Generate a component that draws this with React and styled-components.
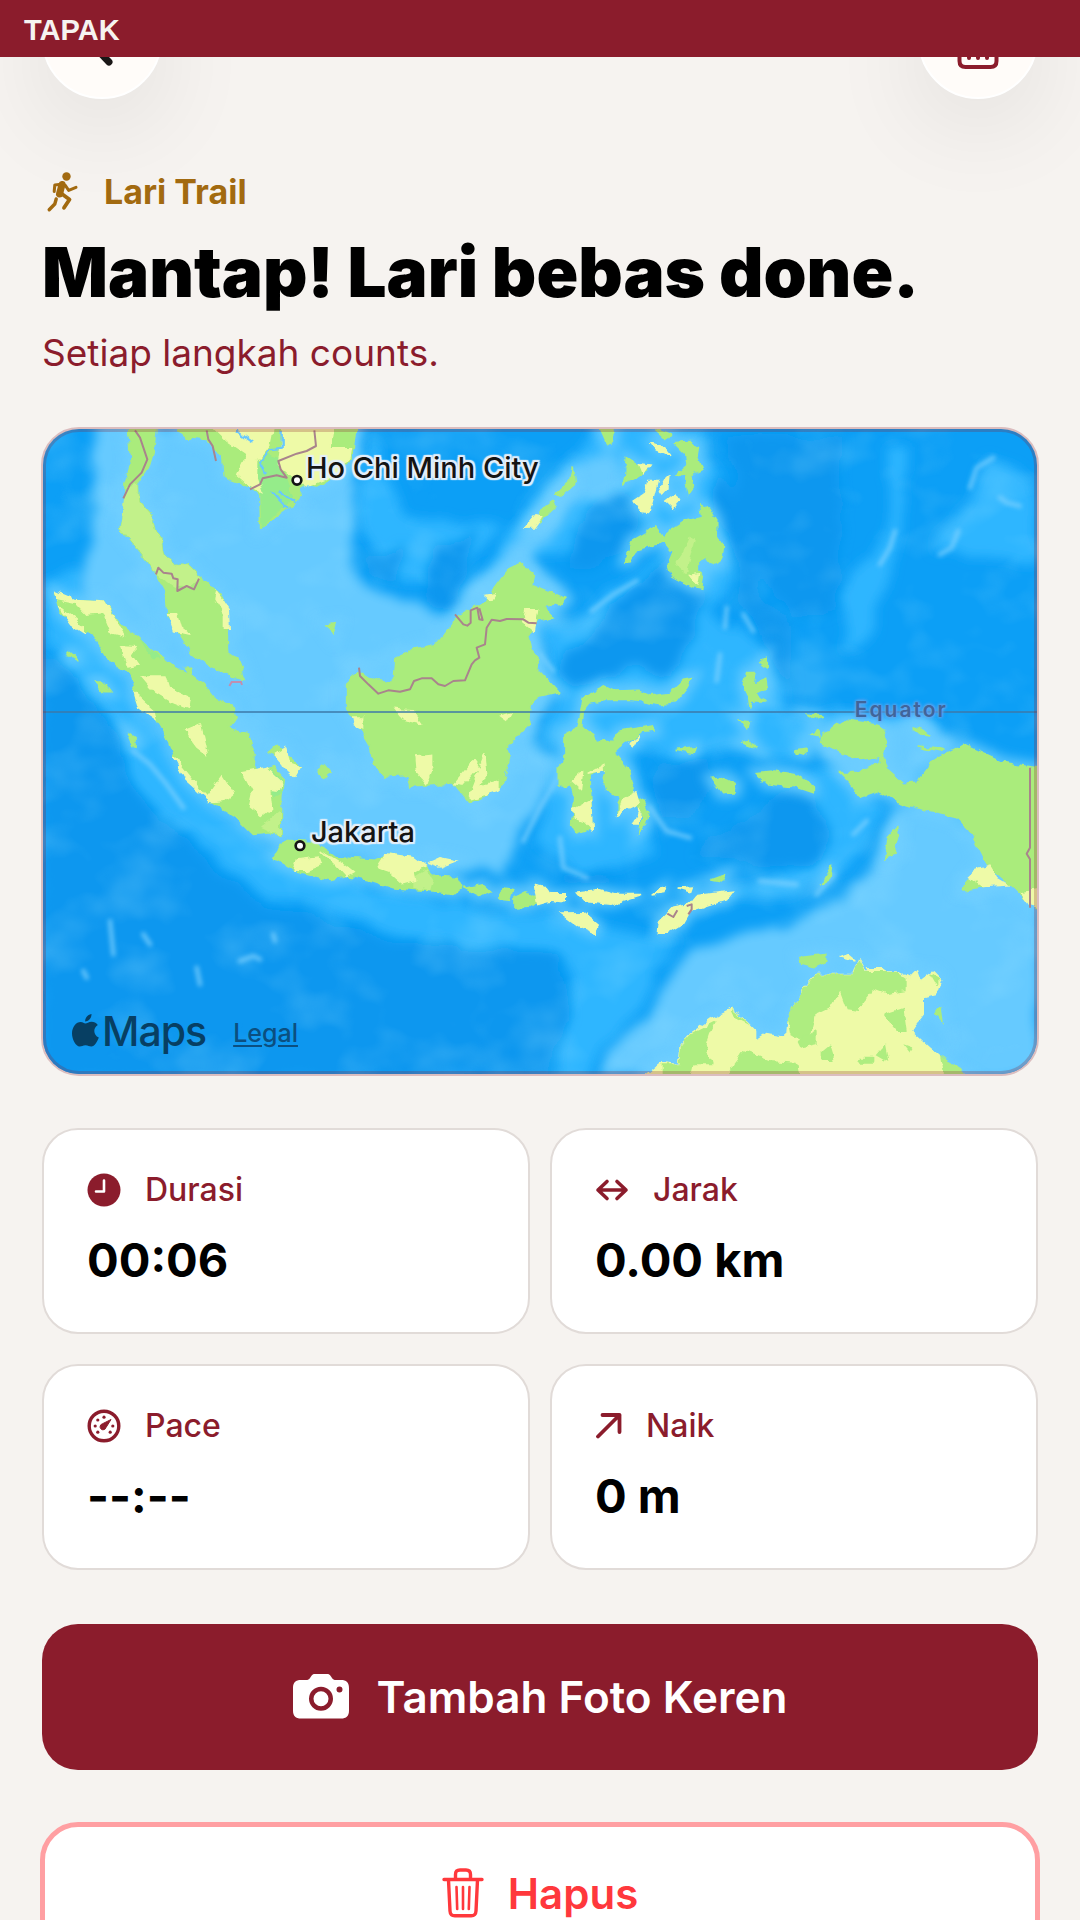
import React from "react";
import styled, { createGlobalStyle } from "styled-components";

const wine = "#8b1c2c";
const ui = `Inter, "Noto Sans", sans-serif`;

const GlobalStyle = createGlobalStyle`
  *, *::before, *::after { box-sizing: border-box; }
  body { margin: 0; background: #f6f3f0; font-family: ${ui}; color: #000; }
  svg { display: block; flex: none; }
`;

const Shell = styled.div`
  display: flex;
  flex-direction: column;
  height: 100vh;
  background: #f6f3f0;
`;

const Banner = styled.header`
  position: relative;
  z-index: 2;
  flex: none;
  padding: 14px 24px 11px;
  background: ${wine};
  color: #f6f3f0;
  font: 700 29px/32px "Liberation Sans", sans-serif;
`;

const Scroller = styled.main`
  flex: 1;
  min-height: 0;
  overflow: hidden auto;
  scrollbar-width: none;
`;

const Screen = styled.div`
  display: flex;
  flex-direction: column;
  gap: 54px;
  margin-top: -78px;
  padding: 0 42px 42px;
`;

const NavBar = styled.nav`
  display: flex;
  justify-content: space-between;
  margin-bottom: 18px;
`;

const RoundButton = styled.button`
  display: grid;
  place-items: center;
  width: 120px;
  height: 120px;
  padding: 0;
  border: 2px solid #fff;
  border-radius: 50%;
  background: #fffcf9;
  color: ${(p) => p.$color};
  box-shadow: 0 24px 100px rgba(0, 0, 0, 0.09);
`;

const Intro = styled.section`
  display: flex;
  flex-direction: column;
  gap: 16px;
`;

const Activity = styled.div`
  display: flex;
  align-items: center;
  gap: 22px;
  color: #a26a10;
  font-size: 34px;
  font-weight: 700;
  line-height: 42px;
`;

const Headline = styled.h1`
  margin: 0;
  font-size: 69px;
  font-weight: 900;
  line-height: 86px;
`;

const Tagline = styled.p`
  margin: 0;
  color: ${wine};
  font-size: 37px;
  line-height: 44px;
`;

const MapFrame = styled.section`
  position: relative;
  aspect-ratio: 996 / 645;
  padding: 0 1px;
  border-radius: 38px;
  &::after {
    content: "";
    position: absolute;
    inset: -2px -1px;
    border: 5px solid rgba(139, 28, 44, 0.25);
    border-radius: 38px;
    pointer-events: none;
  }
`;

const MapArt = styled.svg`
  width: 100%;
  height: 100%;
  border-radius: 36px;
`;

const MapLabel = styled.span`
  position: absolute;
  left: ${(p) => p.$x}%;
  top: ${(p) => p.$y}%;
  white-space: nowrap;
  color: ${(p) => (p.$faint ? "#40659a" : "#141414")};
  font-size: ${(p) => (p.$faint ? 21 : 29)}px;
  font-weight: ${(p) => (p.$faint ? 600 : 500)};
  line-height: 34px;
  letter-spacing: ${(p) => (p.$faint ? "2px" : "normal")};
  text-shadow: ${(p) =>
    p.$faint
      ? "0 0 3px #6ba6ee, 0 0 3px #6ba6ee, 0 0 4px #6ba6ee"
      : "2px 0 1px #e4effa, -2px 0 1px #e4effa, 0 2px 1px #e4effa, 0 -2px 1px #e4effa, 2px 2px 1px #e4effa, -2px -2px 1px #e4effa, 2px -2px 1px #e4effa, -2px 2px 1px #e4effa"};
`;

const Attribution = styled.div`
  position: absolute;
  left: 29px;
  bottom: 18px;
  display: flex;
  align-items: center;
  color: #073f63;
`;

const MapBrand = styled.span`
  margin: 0 27px 0 3px;
  font-size: 41px;
  line-height: 50px;
  font-weight: 500;
  letter-spacing: -1px;
`;

const LegalLink = styled.a`
  padding-top: 4px;
  color: #0b4f80;
  font-size: 25px;
  font-weight: 500;
  line-height: 34px;
  text-underline-offset: 3px;
`;

const StatGrid = styled.dl`
  display: grid;
  grid-template-columns: 1fr 1fr;
  gap: 30px 20px;
  margin: 0;
`;

const StatCard = styled.div`
  display: flex;
  flex-direction: column;
  gap: 22px;
  padding: 40px 43px 44px;
  border: 2px solid #e1dbd8;
  border-radius: 36px;
  background: #fff;
`;

const StatName = styled.dt`
  display: flex;
  align-items: center;
  gap: 24px;
  color: ${wine};
  font-size: 32px;
  font-weight: 500;
  line-height: 40px;
`;

const StatValue = styled.dd`
  margin: 0;
  font-size: 47px;
  font-weight: 700;
  line-height: 56px;
`;

const ActionButton = styled.button`
  display: flex;
  align-items: center;
  justify-content: center;
  gap: ${(p) => (p.$danger ? 24 : 28)}px;
  flex: none;
  height: ${(p) => (p.$danger ? 138 : 146)}px;
  border: 0;
  border-radius: 36px;
  outline: ${(p) => (p.$danger ? "5px solid #ff9fa2" : "none")};
  outline-offset: -3px;
  background: ${(p) => (p.$danger ? "#fff" : wine)};
  color: ${(p) => (p.$danger ? "#ff383c" : "#fff")};
  font-family: inherit;
  font-size: ${(p) => (p.$danger ? 42 : 44)}px;
  font-weight: 600;
`;

const BackIcon = () => (
  <svg width="40" height="60" viewBox="0 0 40 60" fill="none" stroke="currentColor" strokeWidth="7" strokeLinecap="round" strokeLinejoin="round">
    <path d="M27 7 5 30l22 23" />
  </svg>
);

const BinIcon = () => (
  <svg width="46" height="64" viewBox="0 0 46 64" fill="none" stroke="currentColor" strokeWidth="4" strokeLinecap="round">
    <path d="M4.500 18v36q0 6 6 6h25q6 0 6-6V18M1 13h44M15 12V7q0-5 5-5h6q5 0 5 5v5M14 25v26M23 25v26M32 25v26" />
  </svg>
);

const RunnerIcon = () => (
  <svg width="40" height="42" viewBox="0 0 40 42" fill="none" stroke="currentColor" strokeLinecap="round" strokeLinejoin="round">
    <circle cx="24.500" cy="5.500" r="4.200" fill="currentColor" stroke="none" />
    <path d="M12.200 20.500 12.800 14l6.500-.8 3.800 1 3.600 5.200 7.300-3" strokeWidth="3" />
    <path d="M20 13.500 17.500 23" strokeWidth="7" />
    <path d="m20 23 7.500 5.500-5.500 8.300" strokeWidth="3.800" />
    <path d="M14.200 28 12.800 33 7.200 38.800" strokeWidth="3.400" />
  </svg>
);

const ClockIcon = () => (
  <svg width="34" height="34" viewBox="0 0 34 34" fill="none">
    <circle cx="17" cy="17" r="16.500" fill="currentColor" />
    <path d="M17 7.500v11H9" stroke="#fff" strokeWidth="2.600" strokeLinecap="round" strokeLinejoin="round" />
  </svg>
);

const DistanceIcon = () => (
  <svg width="34" height="34" viewBox="0 0 34 34" fill="none" stroke="currentColor" strokeWidth="3.600" strokeLinecap="round" strokeLinejoin="round">
    <path d="M3 17h28M12 8.500 3 17l9 8.500M22 8.500l9 8.500-9 8.500" />
  </svg>
);

const GaugeIcon = () => (
  <svg width="34" height="34" viewBox="0 0 34 34" fill="none">
    <circle cx="17" cy="17" r="14.800" stroke="currentColor" strokeWidth="3.400" />
    <path d="M24 10.500 19 18.500a3 3 0 1 1-3.800-3.600Z" fill="currentColor" stroke="currentColor" strokeLinejoin="round" />
    <g fill="currentColor">
      <circle cx="17" cy="8.200" r="1.600" />
      <circle cx="10.800" cy="11" r="1.600" />
      <circle cx="8.200" cy="17" r="1.600" />
      <circle cx="10.800" cy="23.200" r="1.600" />
      <circle cx="23.200" cy="23.200" r="1.600" />
      <circle cx="25.800" cy="17" r="1.600" />
    </g>
  </svg>
);

const AscentIcon = () => (
  <svg width="27" height="34" viewBox="0 0 27 34" fill="none" stroke="currentColor" strokeWidth="3.800" strokeLinecap="round" strokeLinejoin="round">
    <path d="M3 27.500 24.500 6M7.500 6h17v17" />
  </svg>
);

const CameraIcon = () => (
  <svg width="56" height="46" viewBox="0 0 56 46">
    <path
      fill="currentColor"
      fillRule="evenodd"
      d="M8 6h5c2 0 3-.6 4-2l1-1.600C19.200.6 20.300 0 22 0h12c1.700 0 2.800.6 4 2.400L39 4c1 1.400 2 2 4 2h5c5.400 0 8 2.600 8 8v22.500c0 5.400-2.600 8-8 8H8c-5.400 0-8-2.600-8-8V14c0-5.400 2.600-8 8-8Zm20 6.700a12 12 0 1 0 0 24 12 12 0 0 0 0-24Zm0 4.500a7.500 7.500 0 1 1 0 15 7.500 7.500 0 0 1 0-15Zm18.500-4.700a3 3 0 1 0 0 6 3 3 0 0 0 0-6Z"
    />
  </svg>
);

const TrashIcon = () => (
  <svg width="42" height="50" viewBox="0 0 42 50" fill="none" stroke="currentColor" strokeWidth="3.400" strokeLinecap="round" strokeLinejoin="round">
    <path d="M2 11.500h38M6.500 12l1.500 31c.2 3.200 1.800 4.800 4.800 4.800h16.400c3 0 4.600-1.600 4.800-4.800l1.500-31M13.500 11V6.500C13.500 3.500 15 2 18 2h6c3 0 4.500 1.500 4.500 4.500V11" />
    <path strokeWidth="2.600" d="m14.500 19 .7 22M21 19v22M27.500 19l-.7 22" />
  </svg>
);

const AppleMark = () => (
  <svg width="28" height="34" viewBox="0 0 28 34" fill="currentColor">
    <path d="M20.500 0c.3 3.600-2.600 7.300-6.300 7.400C13.800 4 17 .5 20.500 0ZM14.300 9.500c1.700 0 3.300-1.800 6.300-1.800 2.300 0 4.700 1.100 6.200 3.300-5.200 3.100-4.400 10.300 1 12.500-1.400 3.900-4.200 9-7.500 9-2.200 0-3-1.300-5.800-1.300s-3.700 1.300-5.800 1.300C4.900 32.500 1 25.600 1 19.500c0-6.900 4.300-11.600 8.600-11.600 2.400 0 3.600 1.600 4.700 1.600Z" />
  </svg>
);

const shelf = [
  "M150 10H950L935 300 940 460 1040 520 1230 565 1340 450 1420 370 1500 440 1600 520 1500 640 1520 780 1520 850 1470 960 1560 1040 1440 1160 1400 1360 1250 1370 900 1300 700 1260 560 1100 400 900 250 700 120 480 170 250Z",
  "M1680 1970 1720 1870 1800 1790 1890 1680 1960 1590 2150 1520 2400 1450 2510 1340 2570 1160 2700 1130 3000 1400 3000 1970Z",
  "M2330 960 2420 900 2640 900 2760 960 2600 1110 2420 1080 2330 1020Z",
  "M1390 1130 1490 1000 1530 1080 1440 1240 1400 1340Z",
  "M1540 190 1700 80 1760 180 1700 260 1600 250 1480 420 1420 380Z",
];

const midWater = [
  "M6 480 120 450 300 840 480 1130 740 1290 1000 1400 1300 1450 1560 1490 1900 1560 1700 1750 1560 1600 1250 1580 950 1500 700 1430 480 1280 300 1100 180 860 6 660Z",
  "M1240 600 1340 450 1500 200 1680 20 1980 10 2050 260 2060 460 2000 560 2180 680 2230 880 2500 870 2700 930 2500 1100 2370 1000 1600 1000 1500 960 1560 800 1500 640 1620 570 1900 380 1780 280 1620 400 1440 420Z",
  "M1500 1000H1760L1850 1300 1640 1370 1500 1260Z",
  "M2210 1050 2400 1050 2530 1180 2430 1360 2240 1430 1900 1420 2240 1360 2380 1260Z",
  "M1600 1650 1900 1600 1750 1800 1640 1980 1540 1980Z",
  "M2540 60 2600 60 2590 340 2480 640 2400 700 2420 460 2550 320Z",
  "M2670 400 2780 240 2840 100 2990 200 2990 430 2760 390Z",
  "M1000 30 1100 300 1400 300 1200 480 1020 460 940 260Z",
  "M960 1680 1080 1620 1120 1700ZM1180 1840 1240 1820 1260 1960 1200 1960Z",
];

const deepWater = [
  "M1550 730 1650 610 1900 400 1980 510 1970 640 1900 760 1800 750 1600 790Z",
  "M1590 430 1640 280 1740 220 1810 320 1740 400 1620 440Z",
  "M2010 180 2100 220 2150 500 2260 640 2240 800 2170 660 2080 520 2080 380Z",
  "M1840 1090 1880 1010 1990 1010 2010 1100 1960 1190 1860 1180Z",
  "M1960 1310 2010 1250 2200 1140 2300 1090 2390 1220 2360 1310 2220 1350Z",
  "M6 700 120 760 200 930 330 1150 500 1330 700 1460 900 1520 1200 1580 1560 1600 1590 1790 1500 1970 6 1970Z",
  "M1160 400 1300 310 1260 560 1160 530ZM950 420 1080 380 1080 500Z",
  "M1560 1360 1740 1370 1720 1400 1590 1390Z",
  "M2060 60 2400 60 2400 560 2260 600 2140 400Z",
];

const greenLand = [
  "M262 20H348L340 90 325 140 292 190 295 240 335 285 345 330 362 350 370 400 400 430 440 430 475 465 500 485 540 520 562 570V690L590 710 615 775 575 768 520 740 460 700 420 640 385 590 378 510 350 460 305 400 240 320 255 260V190L275 130Z",
  "M405 20H948L935 110 880 170 830 195 790 190 770 240 720 280 662 320 660 220 630 195 590 180 550 165 545 100 500 55 440 50Z",
  "M45 515 90 535 190 540 230 600 290 645 340 690 400 735 450 760 490 790 520 830 575 850 585 890 565 920 625 940 645 1000 640 1060 700 1040 730 1075 722 1130 720 1240 690 1235 640 1240 590 1190 510 1140 440 1070 400 1000 380 950 345 890 290 840 270 760 210 720 160 640 110 620 60 570Z",
  "M1442 430 1480 460 1475 490 1576 533 1560 550 1515 555 1540 590 1490 600 1465 640 1475 690 1500 720 1490 740 1558 812 1500 825 1470 850 1465 910 1400 975 1410 1000 1390 1090 1360 1110 1290 1145 1240 1085 1180 1090 1110 1095 1100 1060 1030 1065 1000 1030 990 970 950 900 920 860V790L955 755 1010 780 1060 780 1065 710 1120 685 1190 670 1240 610 1260 580 1330 550 1370 490 1400 450Z",
  "M735 1258 820 1262 850 1280 890 1310 960 1315 1010 1318 1050 1300 1110 1310 1150 1335 1180 1365 1250 1370 1265 1400 1245 1418 1180 1410 1060 1400 1000 1380 930 1365 870 1375 770 1350 700 1310Z",
  "M1632 825 1690 795 1720 810 1800 808 1830 822 1890 815 1930 775 1958 770 1940 800 1905 845 1860 850 1780 838 1700 838 1650 845 1630 870 1625 920 1660 940 1665 965 1720 960 1740 930 1840 915 1845 930 1800 935 1740 975 1720 995 1770 1055 1780 1095 1775 1120 1810 1140 1825 1170 1815 1215 1800 1230 1810 1190 1790 1140 1735 1180V1130L1700 1105 1690 1070 1700 1040 1650 1060 1655 1220 1610 1235 1595 1210 1605 1130 1590 1090 1555 1095V1040L1575 1020V940L1610 925 1625 860Z",
  "M1980 250 2010 265 2030 300V345L2050 380 2045 410 2020 430 2000 405 1975 420V450L1990 460 1985 505 1960 500 1895 465 1885 430 1900 395 1870 360 1810 380 1790 385 1770 420 1755 420 1775 360 1850 318 1870 345 1940 300 1985 290Z",
  "M1905 65 1950 62 1975 80 1970 110 1985 145 1955 160 1960 200 1945 220 1935 160 1910 160 1945 130 1940 100Z",
  "M1762 110 1822 150 1755 190ZM1680 20H1722L1720 65 1705 75ZM1590 180 1597 140 1604 190 1560 225 1548 218ZM1500 270 1540 240 1545 255 1500 300ZM1840 20 1890 40 1880 55Z",
  "M2350 940 2415 897 2470 905 2520 915 2538 960 2530 1005 2545 1050 2590 1090 2630 1087 2680 1020 2770 970 2890 1025 3000 1042V1465L2950 1425 2900 1380 2840 1330 2790 1230 2750 1190 2650 1165 2580 1145 2520 1110 2460 1130 2440 1095 2400 1055 2460 1055 2515 1030 2525 1005 2460 1015 2405 995 2345 965Z",
  "M2160 725 2180 708 2178 740ZM2110 790 2120 755 2145 755 2138 795 2160 780 2180 772 2185 800 2145 820 2175 840 2135 840 2128 870 2122 825ZM2100 895 2125 900 2120 922ZM2105 965 2130 958 2148 980Z",
  "M2015 1075 2050 1070 2090 1090 2085 1115 2045 1118ZM2150 1055 2200 1050 2270 1062 2320 1097V1115L2270 1098 2180 1088ZM1910 988 1965 980 1960 997ZM2260 990 2295 985 2295 1000ZM2300 880 2350 885 2320 895ZM2315 940 2330 930 2340 945ZM2615 920 2650 930 2670 945 2640 940ZM2630 978 2710 985 2700 992Z",
  "M165 780 185 780 212 815 195 815ZM80 688 115 718 95 710ZM265 935 285 950V985ZM685 995 710 972 735 1000 780 1040 765 1063 720 1010ZM832 1050 855 1032 875 1055 850 1073ZM858 612 888 608 878 640ZM435 742 455 742 450 765Z",
  "M1275 1402 1325 1392 1348 1412 1320 1425ZM1380 1420 1400 1402 1418 1405 1408 1438 1380 1435ZM1425 1425 1455 1410 1500 1435 1470 1455 1425 1458ZM2020 1375 2055 1362 2045 1380ZM2345 1385 2375 1330 2370 1370ZM2535 1310 2545 1250 2570 1222 2575 1240 2560 1300ZM2280 1610 2360 1600V1620L2320 1640 2285 1630ZM2765 1405 2790 1375 2840 1395 2770 1407ZM2685 1775 2700 1765 2705 1800Z",
];

const lightLand = [
  "M258 200 292 190 295 240 335 285 345 330 362 350 370 400 400 430 440 430 480 470 450 500 405 500 350 460 305 400 240 320Z",
  "M1905 430 1930 390 1950 345 1965 350 1950 420 1940 460Z",
  "M1120 1370 1160 1345 1180 1375 1170 1410 1120 1400ZM660 1220 720 1170V1240L690 1235Z",
];

const mintLand = [
  "M680 100 715 110 740 170 760 230 665 320 660 215 650 130Z",
  "M690 1045 728 1075 722 1120 700 1130ZM300 650 340 690 360 715 340 715Z",
];

const dryLand = [
  "M520 20H700L690 70 650 120 650 170 665 215 630 195 590 160 620 100 560 60ZM730 20H880L870 80 935 80 930 110 880 165 800 195 760 170 715 130Z",
  "M45 512 100 535 190 540 228 600 255 645 215 635 190 575 140 580 110 548 50 535ZM55 555 130 617 130 635 95 612Z",
  "M305 765 375 765 385 798 448 828 443 862 400 845 345 812ZM283 815 342 868 348 898 296 862ZM437 930 482 912 502 1000 470 975ZM400 1005 500 1128 545 1065 580 1120 558 1138 510 1142 438 1078Z",
  "M608 1055 680 1042 724 1082 718 1108 692 1105 698 1162 665 1188 628 1158 638 1112ZM245 678 288 680 273 702 295 732 268 738ZM383 578 412 578 424 620 448 640 400 630ZM530 512 565 566 568 625H553V578L525 532ZM705 1000 738 980 748 1030 780 1040 765 1066 738 1042Z",
  "M1128 1008 1178 1003V1040L1160 1088 1132 1052ZM1242 1088 1302 1018 1318 1040 1272 1093ZM1288 1122 1335 1000 1340 1060 1314 1100 1374 1082V1108L1295 1133ZM1062 862 1112 866 1143 908 1088 894ZM1458 566 1493 566 1483 632 1448 602ZM938 888 968 888V922L943 912ZM1333 523 1362 518 1350 538ZM1382 885 1412 876 1400 898Z",
  "M772 1316 836 1308 844 1330 800 1348 762 1348ZM842 1287 908 1328 943 1355 920 1368 888 1332ZM1038 1298 1120 1310 1153 1335 1122 1352 1127 1378 1088 1388 1048 1352 1012 1340ZM1162 1327 1200 1310 1248 1320 1200 1338Z",
  "M1483 1393 1512 1398 1527 1418 1573 1418V1443L1530 1437 1493 1448ZM1612 1413 1680 1406 1735 1420 1808 1420 1710 1450 1637 1442ZM1838 1419 1872 1397 1866 1415ZM1913 1401 1957 1398 1952 1412ZM1562 1476 1630 1475 1678 1515 1665 1538 1618 1517ZM1855 1537 1858 1500 1900 1458 1950 1448 1970 1423 2080 1410 2060 1437 1950 1472 1930 1507 1880 1537Z",
  "M1733 1182 1748 1133 1788 1112 1798 1147 1755 1168ZM1778 1212 1800 1160 1798 1212ZM1597 1080 1628 1052 1622 1103ZM1598 1165 1652 1138 1657 1228 1633 1202 1603 1192ZM1643 1057 1692 1030 1693 1047ZM1768 967 1798 943 1780 977Z",
  "M1782 240 1808 223 1823 178 1853 178 1828 272 1798 267ZM1833 67 1862 72 1890 107 1850 89ZM1858 212 1887 157 1884 202 1865 222ZM1877 240 1905 218 1918 240 1900 262ZM1948 463 1978 458 1972 493ZM1453 322 1490 278 1508 283 1480 321ZM1798 128 1828 132 1810 158Z",
  "M2785 1365 2800 1350 2850 1335 2870 1370 2908 1392 2830 1397ZM2945 1415 3000 1405V1460L2970 1450ZM2400 1606 2420 1598 2443 1617ZM2483 1640 2530 1640 2540 1655 2490 1655Z",
  "M1810 1970 1865 1925 1915 1930 1920 1875 1950 1840 2020 1790 2070 1765 2120 1800 2150 1830V1860L2180 1840 2240 1850 2245 1790 2290 1705 2330 1660 2440 1660 2455 1615 2475 1650 2570 1650 2610 1670 2630 1650 2640 1680 2680 1650 2705 1675 2690 1720 2650 1730V1780L2610 1830 2700 1910 2800 1975Z",
];

const southGreen = [
  "M2240 1790 2290 1705 2330 1660 2440 1660 2455 1615 2475 1650 2570 1650 2600 1670 2600 1710 2540 1720 2500 1705 2470 1740 2455 1770 2420 1765 2400 1710 2370 1760 2330 1780 2320 1820 2300 1870 2250 1840Z",
  "M1920 1875 1950 1840 2030 1800 2010 1840 2000 1870 2015 1930 1960 1930 1950 1970 1865 1970V1930L1915 1930ZM2070 1765 2120 1800 2130 1810 2080 1785Z",
  "M2110 1890 2190 1920 2270 1925 2280 1970H2060L2080 1930ZM2530 1780 2590 1760 2600 1830 2570 1830ZM2670 1655 2705 1675 2690 1690ZM2345 1890 2370 1870 2385 1920 2345 1920ZM2270 1860 2330 1830 2330 1870 2280 1880ZM2700 1905 2760 1935 2780 1965H2710ZM2510 1900 2535 1870 2545 1920ZM2460 1910H2500V1925H2455ZM2590 1870 2620 1880 2610 1895Z",
];

const borders = [
  "M285 28 300 50 322 115 305 155 270 190 250 232",
  "M500 28 505 55 518 75 528 120",
  "M823 28 828 75 800 90 770 98 715 120 722 145 740 170 710 163 668 172 660 190 630 205",
  "M348 460 355 440 370 455 395 458 400 472 413 475 412 510 440 495 462 505 477 473",
  "M957 740 960 765 985 790 1015 818 1045 808 1080 812 1110 805 1122 780 1145 772 1175 772 1195 790 1215 795 1240 780 1275 778 1295 730 1305 718 1318 710 1310 680 1335 670 1340 620 1355 596 1380 600 1400 594 1450 595 1465 605 1490 607",
  "M1245 580 1270 610 1282 614 1292 605 1292 568 1312 560 1318 595 1328 597 1318 562",
  "M1882 1478 1900 1488 1912 1468M1940 1455 1955 1450 1955 1465 1945 1480",
  "M2970 1040V1280L2960 1298 2970 1315V1460",
];

const ripples = [
  "M2565 330 2550 380 2520 430M2755 330 2735 380 2700 400M2880 230 2900 245 2940 255M2790 200 2810 140 2860 110",
  "M2060 560 2055 620M2110 580 2140 630M1500 700 1540 750M1655 570 1720 520 1790 480",
  "M210 1500 220 1600M480 1690 470 1640M600 1620 640 1605 660 1615M700 1540 705 1560M130 1650 140 1670M330 1570 310 1540",
  "M280 990 330 1030 380 1090 430 1160M1560 1250 1570 1340 1640 1370M2040 700 2030 780M1450 1260 1500 1160 1560 1060",
  "M1830 1160 1880 1230 1950 1250M2160 1380 2270 1390M2330 1420 2380 1360M2440 1240 2480 1200",
];

const Paths = ({ list, ...rest }) => (
  <g {...rest}>
    {list.map((d) => (
      <path key={d} d={d} />
    ))}
  </g>
);

const City = ({ x, y }) => <circle cx={x} cy={y} r="13" fill="#fff" stroke="#141414" strokeWidth="8" />;

const Archipelago = () => (
  <MapArt viewBox="6 24 2988 1935" preserveAspectRatio="xMidYMid slice" role="img" aria-label="Indonesia">
    <defs>
      <filter id="soft" x="-10%" y="-10%" width="120%" height="120%">
        <feTurbulence type="fractalNoise" baseFrequency="0.007" numOctaves="3" seed="4" result="n" />
        <feDisplacementMap in="SourceGraphic" in2="n" scale="80" xChannelSelector="R" yChannelSelector="G" />
        <feGaussianBlur stdDeviation="18" />
      </filter>
      <filter id="coast" x="0" y="0" width="3000" height="1980" filterUnits="userSpaceOnUse">
        <feTurbulence type="fractalNoise" baseFrequency="0.035" numOctaves="2" seed="7" />
        <feDisplacementMap in="SourceGraphic" scale="22" xChannelSelector="R" yChannelSelector="G" />
      </filter>
      <filter id="shore" x="0" y="0" width="3000" height="1980" filterUnits="userSpaceOnUse">
        <feGaussianBlur stdDeviation="16" />
      </filter>
      <filter id="glint" x="0" y="0" width="3000" height="1980" filterUnits="userSpaceOnUse">
        <feGaussianBlur stdDeviation="7" />
      </filter>
      <filter id="seabed" x="0" y="0" width="3000" height="1980" filterUnits="userSpaceOnUse">
        <feTurbulence type="fractalNoise" baseFrequency="0.005 0.006" numOctaves="3" seed="11" />
        <feColorMatrix values="0 0 0 0 .35  0 0 0 0 .78  0 0 0 0 1  2.600 0 0 0 -1.250" />
      </filter>
    </defs>
    <rect width="3000" height="1980" fill="#0c9ff6" />
    <Paths list={midWater} fill="#2db6ff" filter="url(#soft)" />
    <Paths list={deepWater} fill="#0c97ef" filter="url(#soft)" />
    <Paths list={shelf} fill="#66caff" filter="url(#soft)" />
    <rect width="3000" height="1980" filter="url(#seabed)" opacity=".22" />
    <Paths list={ripples} fill="none" stroke="#7fd2ff" strokeWidth="14" strokeLinecap="round" filter="url(#glint)" opacity=".7" />
    <g filter="url(#shore)" opacity=".75">
      <Paths list={greenLand} fill="#6fcfff" stroke="#6fcfff" strokeWidth="38" />
      <Paths list={dryLand} fill="#6fcfff" stroke="#6fcfff" strokeWidth="28" />
    </g>
    <g filter="url(#coast)">
      <Paths list={greenLand} fill="#aaec7c" stroke="#aaec7c" strokeWidth="5" />
      <Paths list={lightLand} fill="#c2f18a" />
      <Paths list={mintLand} fill="#95ec8a" />
      <Paths list={dryLand} fill="#eefaa7" stroke="#eefaa7" strokeWidth="4" />
      <Paths list={southGreen} fill="#aeed80" />
      <path d="M725 24V80L690 85 660 120 680 160M590 30 640 65M695 208 745 262M715 210 765 245" fill="none" stroke="#68c8ff" strokeWidth="7" />
    </g>
    <Paths list={borders} fill="none" stroke="#a9848c" strokeWidth="6" strokeLinejoin="round" />
    <path d="M568 795 575 783 603 783 606 792" fill="none" stroke="#c08fb0" strokeWidth="6" />
    <path d="M0 873H3000" stroke="#3c78a8" strokeWidth="5" />
    <City x={771} y={178} />
    <City x={780} y={1274} />
  </MapArt>
);

const stats = [
  { name: "Durasi", value: "00:06", Icon: ClockIcon },
  { name: "Jarak", value: "0.00 km", Icon: DistanceIcon },
  { name: "Pace", value: "--:--", Icon: GaugeIcon },
  { name: "Naik", value: "0 m", Icon: AscentIcon },
];

export default function App() {
  return (
    <Shell>
      <GlobalStyle />
      <Banner>TAPAK</Banner>
      <Scroller>
        <Screen>
          <NavBar>
            <RoundButton $color="#1a1717" aria-label="Kembali"><BackIcon /></RoundButton>
            <RoundButton $color={wine} aria-label="Hapus aktivitas"><BinIcon /></RoundButton>
          </NavBar>
          <Intro>
            <Activity><RunnerIcon />Lari Trail</Activity>
            <Headline>Mantap! Lari bebas done.</Headline>
            <Tagline>Setiap langkah counts.</Tagline>
          </Intro>
          <MapFrame>
            <Archipelago />
            <MapLabel $x={26.5} $y={3.4}>Ho Chi Minh City</MapLabel>
            <MapLabel $x={27} $y={59.9}>Jakarta</MapLabel>
            <MapLabel $x={81.6} $y={41} $faint>Equator</MapLabel>
            <Attribution>
              <AppleMark />
              <MapBrand>Maps</MapBrand>
              <LegalLink href="#legal">Legal</LegalLink>
            </Attribution>
          </MapFrame>
          <StatGrid>
            {stats.map(({ name, value, Icon }) => (
              <StatCard key={name}>
                <StatName><Icon />{name}</StatName>
                <StatValue>{value}</StatValue>
              </StatCard>
            ))}
          </StatGrid>
          <ActionButton><CameraIcon />Tambah Foto Keren</ActionButton>
          <ActionButton $danger><TrashIcon />Hapus</ActionButton>
        </Screen>
      </Scroller>
    </Shell>
  );
}
